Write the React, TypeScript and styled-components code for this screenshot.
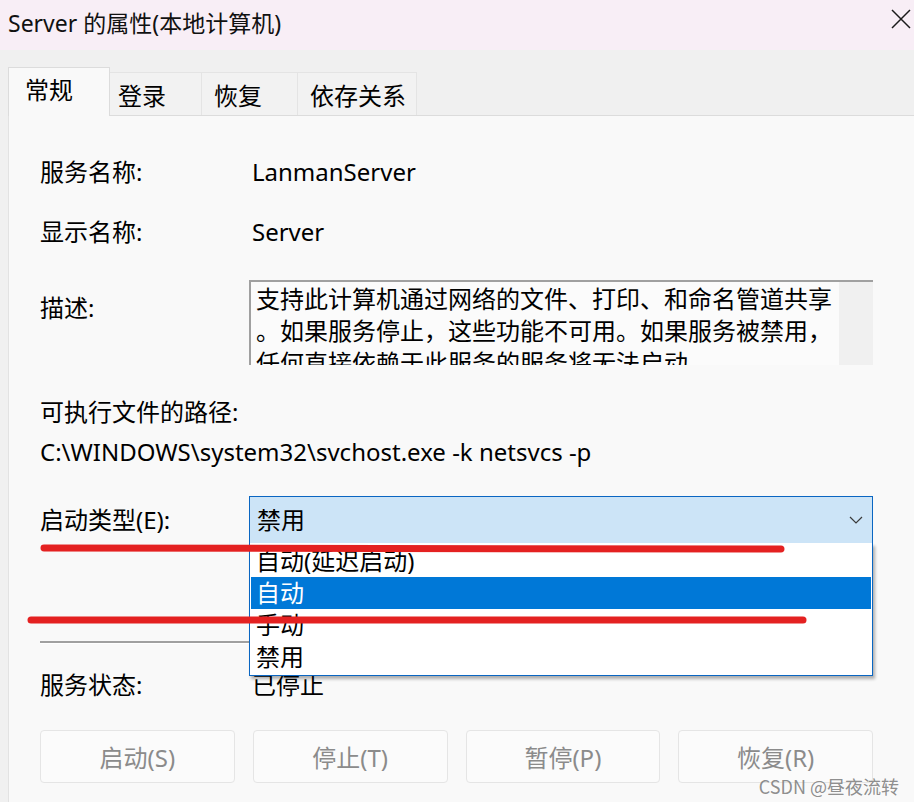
import React from 'react';
import styled, { createGlobalStyle } from 'styled-components';

const GlobalStyle = createGlobalStyle`
  html, body {
    margin: 0;
    padding: 0;
    background: #f0f0f0;
  }
  body {
    font-family: "Noto Sans", "Noto Sans CJK SC", sans-serif;
    color: #000;
  }
  * {
    box-sizing: border-box;
  }
`;

const tabs = [
  { label: '常规', width: 102, pad: 16, active: true },
  { label: '登录', width: 92, pad: 8 },
  { label: '恢复', width: 96, pad: 12 },
  { label: '依存关系', width: 119, pad: 12 },
];

const startupOptions = ['自动(延迟启动)', '自动', '手动', '禁用'];
const actions = ['启动(S)', '停止(T)', '暂停(P)', '恢复(R)'];

const App: React.FC = () => {
  return (
    <>
      <GlobalStyle />
      <Window>
        <TitleBar>
          <Title>Server 的属性(本地计算机)</Title>
          <CloseBtn>
            <svg width="20" height="20" viewBox="0 0 20 20">
              <path d="M1 1 L19 19 M19 1 L1 19" stroke="#1b1b1b" strokeWidth="1.5" fill="none" />
            </svg>
          </CloseBtn>
        </TitleBar>

        <TabStrip>
          {tabs.map((t) => (
            <Tab key={t.label} $width={t.width} $pad={t.pad} $active={!!t.active}>
              {t.label}
            </Tab>
          ))}
        </TabStrip>

        <Panel>
          <FieldRow $top={41}>
            <Label>服务名称:</Label>
            <Value>LanmanServer</Value>
          </FieldRow>
          <FieldRow $top={30}>
            <Label>显示名称:</Label>
            <Value>Server</Value>
          </FieldRow>
          <DescRow>
            <Label>描述:</Label>
            <DescBox>
              <DescText>
                支持此计算机通过网络的文件、打印、和命名管道共享
                <br />
                。如果服务停止，这些功能不可用。如果服务被禁用，
                <br />
                任何直接依赖于此服务的服务将无法启动。
              </DescText>
              <ScrollTrack />
            </DescBox>
          </DescRow>
          <PlainLine $top={32}>可执行文件的路径:</PlainLine>
          <PlainLine $top={10}>C:\WINDOWS\system32\svchost.exe -k netsvcs -p</PlainLine>

          <StartupRow>
            <Label>启动类型(E):</Label>
            <Combo>
              <ComboText>禁用</ComboText>
              <svg width="14" height="8" viewBox="0 0 14 8">
                <path d="M1 1 L7 7 L13 1" stroke="#3a3a3a" strokeWidth="1.2" fill="none" />
              </svg>
              <DropList>
                {startupOptions.map((o) => (
                  <DropItem key={o} $selected={o === '自动'}>
                    {o}
                  </DropItem>
                ))}
              </DropList>
            </Combo>
          </StartupRow>

          <Separator />

          <FieldRow $top={26}>
            <Label>服务状态:</Label>
            <Value>已停止</Value>
          </FieldRow>

          <ButtonRow>
            {actions.map((a) => (
              <ActionButton key={a} disabled>
                {a}
              </ActionButton>
            ))}
          </ButtonRow>
        </Panel>

        <Marks width="914" height="802" viewBox="0 0 914 802">
          <line x1="44" y1="548" x2="781" y2="549" stroke="#e42121" strokeWidth="7" strokeLinecap="round" />
          <line x1="31" y1="620" x2="803" y2="620" stroke="#e42121" strokeWidth="7" strokeLinecap="round" />
        </Marks>

        <Watermark>CSDN @昼夜流转</Watermark>
      </Window>
    </>
  );
};

const Window = styled.div`
  position: relative;
  width: 914px;
  height: 802px;
  overflow: hidden;
  background: #f0f0f0;
  display: flex;
  flex-direction: column;
`;

const TitleBar = styled.div`
  height: 50px;
  flex-shrink: 0;
  display: flex;
  align-items: flex-start;
  justify-content: space-between;
  padding: 0 3px 0 8px;
  background: #f8eef6;
`;

const Title = styled.div`
  margin-top: 8px;
  font-size: 23px;
  line-height: 30px;
  color: #111;
`;

const CloseBtn = styled.div`
  margin-top: 9px;
  width: 20px;
  height: 20px;
  display: flex;
`;

const TabStrip = styled.div`
  height: 65px;
  flex-shrink: 0;
  display: flex;
  align-items: flex-end;
  padding-left: 8px;
`;

const Tab = styled.div<{ $width: number; $pad: number; $active: boolean }>`
  position: relative;
  z-index: ${(p) => (p.$active ? 2 : 0)};
  width: ${(p) => p.$width}px;
  height: ${(p) => (p.$active ? 49 : 43)}px;
  margin-bottom: ${(p) => (p.$active ? -1 : 0)}px;
  padding: ${(p) => (p.$active ? 7 : 8)}px 0 0 ${(p) => p.$pad}px;
  font-size: 24px;
  line-height: 30px;
  background: ${(p) => (p.$active ? '#f9f9f9' : '#f2f2f2')};
  border: 1px solid ${(p) => (p.$active ? '#dcdcdc' : '#e4e4e4')};
  border-bottom: none;
  border-left: ${(p) => (p.$active ? '1px solid #dcdcdc' : 'none')};
`;

const Panel = styled.div`
  flex: 1;
  margin-left: 8px;
  display: flex;
  flex-direction: column;
  padding: 0 41px 0 31px;
  background: #f9f9f9;
  border-top: 1px solid #dcdcdc;
  border-left: 1px solid #e2e2e2;
`;

const FieldRow = styled.div<{ $top: number }>`
  margin-top: ${(p) => p.$top}px;
  display: grid;
  grid-template-columns: 209px 1fr;
  height: 30px;
  font-size: 24px;
  line-height: 30px;
`;

const Label = styled.div`
  font-size: 24px;
  line-height: 30px;
  white-space: nowrap;
`;

const Value = styled.div`
  padding-left: 3px;
  white-space: nowrap;
`;

const DescRow = styled.div`
  margin-top: 33px;
  display: grid;
  grid-template-columns: 209px 1fr;
  height: 85px;

  & > ${Label} {
    margin-top: 13px;
  }
`;

const DescBox = styled.div`
  display: flex;
  height: 85px;
  border-top: 2px solid #a0a0a0;
  border-left: 2px solid #a0a0a0;
  overflow: hidden;
`;

const DescText = styled.div`
  flex: 1;
  padding: 0 0 0 5px;
  font-family: "Noto Sans CJK SC", sans-serif;
  font-size: 24px;
  line-height: 32px;
  background: #fbfbfb;
  white-space: nowrap;
  overflow: hidden;
`;

const ScrollTrack = styled.div`
  width: 34px;
  background: #f0f0f0;
`;

const PlainLine = styled.div<{ $top: number }>`
  margin-top: ${(p) => p.$top}px;
  font-size: 24px;
  line-height: 30px;
  white-space: nowrap;
`;

const StartupRow = styled.div`
  margin-top: 29px;
  display: grid;
  grid-template-columns: 209px 1fr;
  align-items: center;
  height: 48px;
`;

const Combo = styled.div`
  position: relative;
  height: 48px;
  display: flex;
  align-items: center;
  justify-content: space-between;
  padding: 0 9px 0 7px;
  background: #cce4f7;
  border: 1px solid #0a66c2;
`;

const ComboText = styled.span`
  font-size: 24px;
  line-height: 30px;
`;

const DropList = styled.div`
  position: absolute;
  z-index: 10;
  top: 100%;
  left: -1px;
  right: -1px;
  padding: 2px 1px;
  background: #fff;
  border: 1px solid #0a66c2;
  border-top: none;
  box-shadow: 2px 3px 3px rgba(0, 0, 0, 0.3);
`;

const DropItem = styled.div<{ $selected: boolean }>`
  height: 32px;
  line-height: 32px;
  padding-left: 5px;
  font-size: 24px;
  white-space: nowrap;
  background: ${(p) => (p.$selected ? '#0078d7' : 'transparent')};
  color: ${(p) => (p.$selected ? '#fff' : '#000')};
`;

const Separator = styled.div`
  margin-top: 97px;
  height: 3px;
  border-top: 2px solid #a0a0a0;
  border-bottom: 1px solid #fff;
`;

const ButtonRow = styled.div`
  margin-top: 30px;
  display: grid;
  grid-template-columns: repeat(4, 1fr);
  gap: 18px;
`;

const ActionButton = styled.button`
  height: 53px;
  font-family: "Noto Sans", "Noto Sans CJK SC", sans-serif;
  font-size: 24px;
  color: #8b8b8b;
  background: #fbfbfb;
  border: 1px solid #e5e5e5;
  border-radius: 4px;
  padding: 0;
`;

const Marks = styled.svg`
  position: absolute;
  left: 0;
  top: 0;
  z-index: 20;
  pointer-events: none;
`;

const Watermark = styled.div`
  position: absolute;
  z-index: 30;
  right: 15px;
  bottom: 4px;
  font-family: "Noto Sans CJK SC", sans-serif;
  font-size: 18px;
  line-height: 24px;
  color: rgba(128, 128, 128, 0.9);
`;

export default App;
